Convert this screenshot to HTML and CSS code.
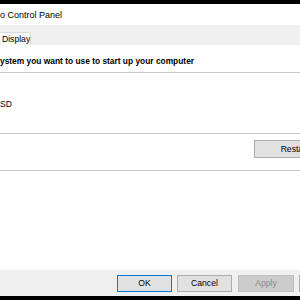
FILE: index.html
```html
<!DOCTYPE html>
<html>
<head>
<meta charset="utf-8">
<link rel="stylesheet" href="styles.css">
</head>
<body>
<div class="window">
  <div class="edge"></div>
  <div class="title">o Control Panel</div>
  <div class="tabs"><div class="tab">Display</div></div>
  <div class="content">
    <div class="heading">ystem you want to use to start up your computer</div>
    <div class="list"><span class="item">SD</span></div>
    <div class="actions"><button class="btn restart">Restart</button></div>
    <div class="fill"></div>
  </div>
  <div class="footer">
    <button class="btn ok">OK</button>
    <button class="btn">Cancel</button>
    <button class="btn disabled">Apply</button>
    <button class="btn">Help</button>
  </div>
  <div class="edge"></div>
</div>
</body>
</html>
```
FILE: styles.css
```css
html, body {
  margin: 0;
  padding: 0;
  width: 300px;
  height: 300px;
  overflow: hidden;
  background: #000;
}
.window {
  display: flex;
  flex-direction: column;
  width: 300px;
  height: 300px;
  font-family: "Liberation Sans", Arial, sans-serif;
  font-size: 8.6px;
  color: #000;
}
.edge {
  height: 4px;
  flex: none;
  background: #000;
}
.title {
  height: 21px;
  flex: none;
  background: #fff;
  line-height: 22px;
  font-size: 9px;
  white-space: nowrap;
}
.tabs {
  height: 20px;
  flex: none;
  background: #f0f0f0;
  display: flex;
  align-items: flex-end;
}
.tab {
  height: 12px;
  width: 30px;
  border: 1px solid #dadada;
  border-left: none;
  border-bottom: none;
  background: #fafafa;
  line-height: 13px;
  text-indent: 2px;
  white-space: nowrap;
}
.content {
  flex: 1;
  background: #fff;
  display: flex;
  flex-direction: column;
}
.heading {
  padding-top: 10px;
  height: 17px;
  line-height: 13px;
  font-weight: bold;
  font-size: 8.4px;
  white-space: nowrap;
  border-bottom: 1px solid #c9c9c9;
}
.list {
  height: 35px;
  padding-top: 25px;
  line-height: 13px;
  border-bottom: 1px solid #c9c9c9;
}
.actions {
  height: 37px;
  padding-top: 6px;
  box-sizing: border-box;
  padding-left: 254px;
  border-bottom: 1px solid #c9c9c9;
  display: flex;
  align-items: flex-start;
}
.fill {
  flex: 1;
}
.btn {
  font-family: inherit;
  font-size: 8.6px;
  color: #000;
  height: 17px;
  width: 55px;
  padding: 0;
  margin: 0;
  flex: none;
  background: #e1e1e1;
  border: 1px solid #adadad;
  line-height: 15px;
}
.restart {
  width: 81px;
  height: 18px;
}
.footer {
  height: 26px;
  flex: none;
  background: #f0f0f0;
  display: flex;
  gap: 5px;
  padding: 5px 0 0 117px;
  box-sizing: border-box;
  align-items: flex-start;
}
.ok {
  border-color: #0078d7;
}
.disabled {
  width: 56px;
  margin-left: 1px;
  background: #cccccc;
  border-color: #bfbfbf;
  color: #8a8a8a;
}
```
